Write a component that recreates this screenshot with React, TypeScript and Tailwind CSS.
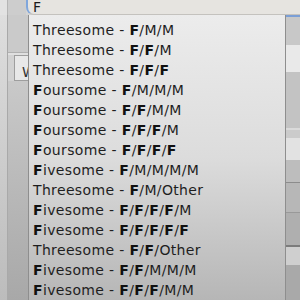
const items: [string, string][] = [
  ["Threesome", "F/M/M"],
  ["Threesome", "F/F/M"],
  ["Threesome", "F/F/F"],
  ["Foursome", "F/M/M/M"],
  ["Foursome", "F/F/M/M"],
  ["Foursome", "F/F/F/M"],
  ["Foursome", "F/F/F/F"],
  ["Fivesome", "F/M/M/M/M"],
  ["Threesome", "F/M/Other"],
  ["Fivesome", "F/F/F/F/M"],
  ["Fivesome", "F/F/F/F/F"],
  ["Threesome", "F/F/Other"],
  ["Fivesome", "F/F/M/M/M"],
  ["Fivesome", "F/F/F/M/M"],
]

function Highlight({ text }: { text: string }) {
  // bold every "F" segment of the combo
  const parts = text.split("/")
  return (
    <>
      {parts.map((p, i) => (
        <span key={i}>
          {i > 0 && "/"}
          {p === "F" ? <b className="font-bold text-[#111]">F</b> : p}
        </span>
      ))}
    </>
  )
}

function Row({ name, combo }: { name: string; combo: string }) {
  const startsF = name.startsWith("F")
  return (
    <li className="h-5 leading-5 pl-[4px] whitespace-nowrap">
      {startsF ? (
        <>
          <b className="font-bold text-[#111]">F</b>
          {name.slice(1)}
        </>
      ) : (
        name
      )}
      {" - "}
      <Highlight text={combo} />
    </li>
  )
}

function RightStrip() {
  return (
    <div className="w-[14px] flex flex-col">
      <div className="h-[2px] bg-[#7b9fd6]" />
      <div className="h-[28px] bg-[#c8c8c8]" />
      <div className="h-[27px] bg-[#e9e9e9]" />
      <div className="h-[56px] bg-[#c3c3c3]" />
      <div className="h-[2px] bg-[#dadada]" />
      <div className="h-[8px] bg-[#cbcbcb]" />
      <div className="h-[22px] bg-[#e2e2e2]" />
      <div className="h-[22px] bg-[#bdbdbd]" />
      <div className="h-px bg-[#8c8c8c]" />
      <div className="h-[29px] bg-[#b7b7b7]" />
      <div className="h-px bg-[#999]" />
      <div className="h-[32px] bg-[#afafaf]" />
      <div className="h-[2px] bg-[#7c7c7c]" />
      <div className="h-[18px] bg-[#cfcfcf]" />
      <div className="h-[35px] bg-[#a9a9a9]" />
    </div>
  )
}

export default function App() {
  return (
    <div
      className="relative w-[300px] h-[300px] overflow-hidden bg-[#d4d4d4]"
      style={{ fontFamily: '"DejaVu Sans", Verdana, sans-serif' }}
    >
      {/* top input strip */}
      <div className="flex h-[15px]">
        <div className="w-[7px] bg-[#e2e2e2]" />
        <div className="w-[19px] bg-[#cdcdcd] border-l border-[#b5b5b5]" />
        <div className="flex-1 flex items-center bg-[#e6e4e0] border-b border-[#c4c2be] rounded-bl-[8px] border-l-[2px] border-l-[#7fa6dc] pl-[5px] text-[14px] leading-[14px] text-[#1a1a1a]">
          F
        </div>
      </div>

      {/* page body */}
      <div className="flex h-[285px]">
        <div className="w-[7px] bg-gradient-to-b from-[#dedede] to-[#bcbcbc]" />
        <div className="w-[22px] flex flex-col border-l border-[#a9a9a9]">
          <div className="h-[38px] bg-[#cacaca] border-b border-[#b0b0b0]" />
          <div className="h-[2px] bg-[#e0e0e0]" />
          <div className="h-[26px] flex">
            <div className="w-[6px] bg-[#d2d2d2]" />
            <div className="flex-1 bg-[#e8e8e8] border-l border-t border-b border-[#9e9e9e] text-[14px] text-[#333] pl-[7px] pt-[9px] leading-[14px] overflow-hidden">
              W
            </div>
          </div>
          <div className="flex-1 bg-gradient-to-b from-[#c9c9c9] to-[#a8a8a8]" />
        </div>
        <div className="flex-1" />
        <RightStrip />
      </div>

      {/* dropdown */}
      <ul className="absolute left-[28px] top-[15px] w-[258px] h-[285px] pt-[4.5px] border-l border-r border-[#8e8e8e] bg-gradient-to-b from-[#ececec] via-[#dcdcdc] to-[#b6b6b6] text-[14px] tracking-[0.35px] text-[#1e1e1e]">
        {items.map(([n, c], i) => (
          <Row key={i} name={n} combo={c} />
        ))}
      </ul>
    </div>
  )
}
